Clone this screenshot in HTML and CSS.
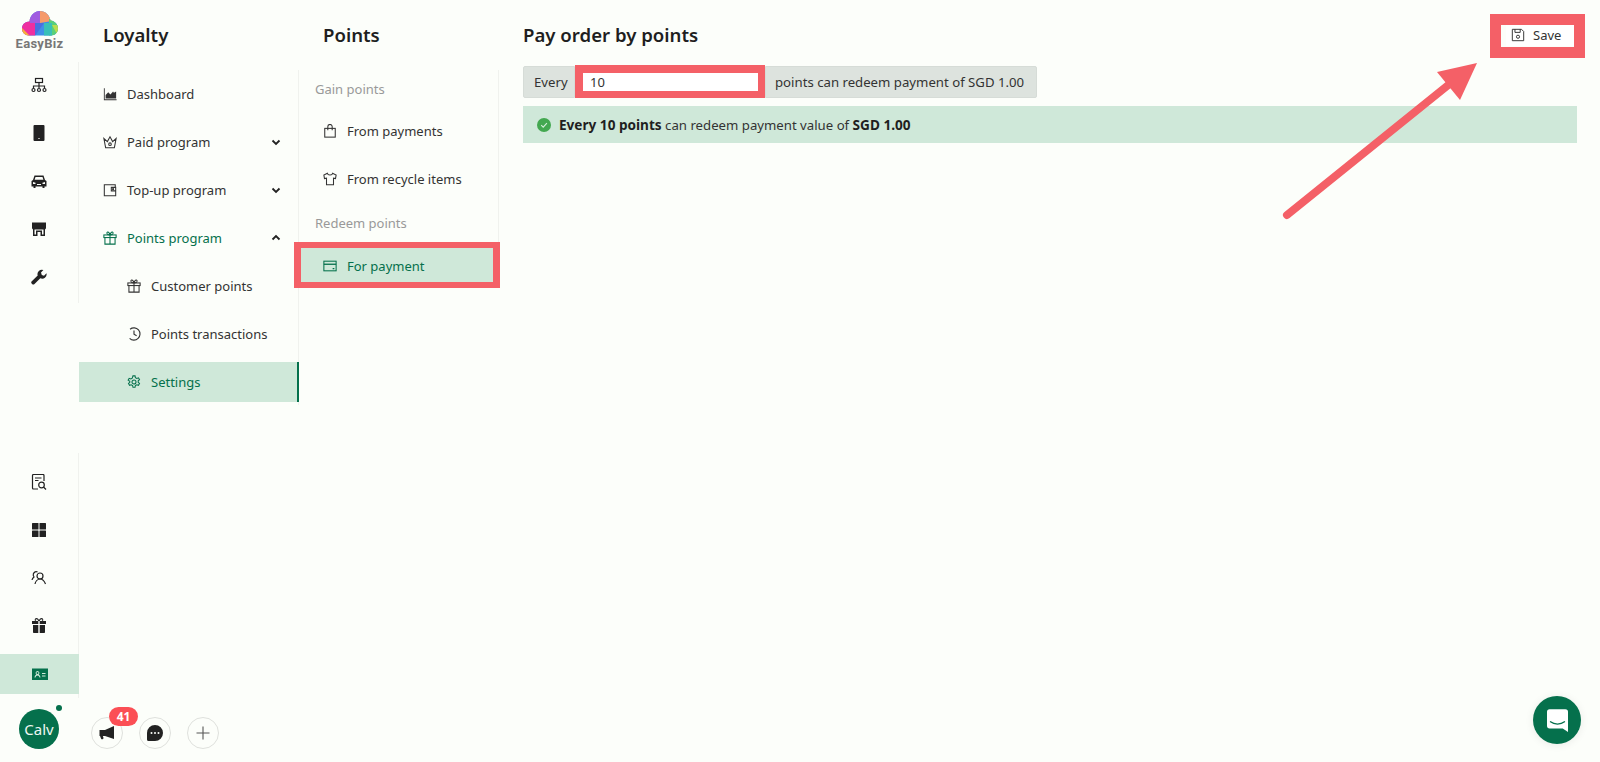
FILE: index.html
```html
<!DOCTYPE html>
<html lang="en">
<head>
    <meta charset="UTF-8">
    <meta name="viewport" content="width=device-width, initial-scale=1.0">
    <title>Pay order by points</title>
    <link rel="stylesheet" href="styles.css">
</head>
<body>
    <div class="app">
        <aside class="rail">
            <div class="logo">
                <svg width="36" height="25" viewBox="0 0 36 25">
                    <defs>
                        <clipPath id="cloud">
                            <path d="M7 24.500C3 24.500 0 21.500 0 17.500S3 10.500 7.500 10.500C8 4.500 12.500 0 18 0S27.500 4 28.500 9.500C32.800 10 36 13.300 36 17.500S32.800 24.500 29 24.500Z"/>
                        </clipPath>
                    </defs>
                    <g clip-path="url(#cloud)">
                        <rect width="36" height="25" fill="#3f8fe8"/>
                        <polygon points="0,8 13,8 13,25 0,25" fill="#ee2fa0"/>
                        <polygon points="8,0 18,0 18,12 8,12" fill="#a05ce0"/>
                        <polygon points="18,0 30,0 30,10 18,12" fill="#f59a6a"/>
                        <polygon points="27,8 36,8 36,25 27,25" fill="#58d07a"/>
                        <polygon points="13,12 22,12 13,25" fill="#4a6fe0"/>
                        <polygon points="22,12 30,12 30,25 22,25" fill="#38c0b8"/>
                        <polygon points="0,17 8,25 0,25" fill="#f5b03a"/>
                        <polygon points="30,14 36,14 36,25" fill="#b8dc50"/>
                    </g>
                </svg>
                <span class="logo-text">EasyBiz</span>
            </div>
            <nav class="rail-group rail-top">
                <a class="rail-item">
                    <svg class="icon" viewBox="0 0 16 16" fill="none" stroke="currentColor" stroke-width="1.2"><rect x="4.500" y="1.500" width="7" height="4"/><path d="M8 5.500V9M2.500 11V9h11v2M8 9v2"/><circle cx="2.500" cy="13" r="1.500"/><circle cx="8" cy="13" r="1.500"/><circle cx="13.500" cy="13" r="1.500"/></svg>
                </a>
                <a class="rail-item">
                    <svg class="icon" viewBox="0 0 16 16" fill="currentColor"><path d="M3.500 0h9A1 1 0 0 1 13.500 1v14a1 1 0 0 1-1 1h-9a1 1 0 0 1-1-1V1a1 1 0 0 1 1-1zM7.400 13v1h1.200v-1z" fill-rule="evenodd"/></svg>
                </a>
                <a class="rail-item">
                    <svg class="icon" viewBox="0 0 16 16" fill="currentColor"><path fill-rule="evenodd" d="M3.500 2.500h9L14 7l1.500 1v5.500h-2V15h-2v-1.500h-7V15h-2v-1.500h-2V8L2 7zM4.500 4 3.600 6.800h8.800L11.500 4zM2 9v2h2.500V9.800zM14 9l-2.500.8V11H14zM6 11v1h4v-1z"/></svg>
                </a>
                <a class="rail-item">
                    <svg class="icon" viewBox="0 0 16 16" fill="currentColor"><path fill-rule="evenodd" d="M1 1.500h14V7a1.500 1.500 0 0 1-1 1.400V15H9.500v-4h-3v4H2V8.400A1.500 1.500 0 0 1 1 7zM3.500 8.500v5h1.500V9.500h6v4h1.500v-5z"/></svg>
                </a>
                <a class="rail-item">
                    <svg class="icon" viewBox="0 0 16 16" fill="currentColor"><path d="M15.500 4.300 13 6.700 10.800 6 10 3.500 12.400 1A4.400 4.400 0 0 0 6.700 6.500L.8 12.300a1.700 1.700 0 0 0 0 2.400l.3.300a1.700 1.700 0 0 0 2.400 0l5.800-5.800a4.400 4.400 0 0 0 6.200-4.900z"/></svg>
                </a>
            </nav>
            <nav class="rail-group rail-bottom">
                <a class="rail-item">
                    <svg class="icon" viewBox="0 0 16 16" fill="none" stroke="currentColor" stroke-width="1.200"><path d="M7 15H2.500a1 1 0 0 1-1-1V1.500a1 1 0 0 1 1-1h9.500a1 1 0 0 1 1 1V7"/><path d="M4 4h6.500M4 6.500h3.500"/><circle cx="10.500" cy="11" r="2.800"/><path d="M12.500 13l2.500 2.500"/></svg>
                </a>
                <a class="rail-item">
                    <svg class="icon" viewBox="0 0 16 16" fill="currentColor"><rect x="1" y="1" width="6.500" height="6.500" rx=".5"/><rect x="8.500" y="1" width="6.500" height="6.500" rx=".5"/><rect x="1" y="8.500" width="6.500" height="6.500" rx=".5"/><rect x="8.500" y="8.500" width="6.500" height="6.500" rx=".5"/></svg>
                </a>
                <a class="rail-item">
                    <svg class="icon" viewBox="0 0 16 16" fill="none" stroke="currentColor" stroke-width="1.200"><path d="M1 10c.3-1.500 1-2.300 2-3-.8-1-1-2-.6-3.200C3 2 5 1 6.500 2"/><circle cx="9" cy="6" r="3"/><path d="M4 14c.5-2.500 2.500-5 5-5s4.500 2.500 5.500 5"/></svg>
                </a>
                <a class="rail-item">
                    <svg class="icon" viewBox="0 0 16 16" fill="currentColor"><path fill-rule="evenodd" d="M5.500 0C4 0 3.200 1.600 4 3H1v3h6.300V3h1.400v3H15V3h-3c.8-1.400 0-3-1.500-3C9.500 0 8.500.8 8 2 7.500.8 6.500 0 5.500 0zM5.500 1.200c.8 0 1.500 1 1.700 1.800H5.500c-1.200 0-1.200-1.800 0-1.800zM10.500 1.200c1.200 0 1.200 1.800 0 1.800H8.800c.2-.8.900-1.800 1.700-1.800z"/><path d="M2 7h5.300v8H2.800a.8.8 0 0 1-.8-.8zM8.700 7H14v7.200a.8.8 0 0 1-.8.8H8.700z"/></svg>
                </a>
                <a class="rail-item active">
                    <svg class="icon" viewBox="0 0 16 16" fill="currentColor"><path fill-rule="evenodd" d="M0 2.500h16v11.500H0zM5.500 5a2 2 0 0 0-1.200 3.500C3.300 9 2.700 10 2.500 11.500h1c.3-1.300 1-2 2-2s1.700.7 2 2h1c-.2-1.500-.8-2.500-1.800-3A2 2 0 0 0 5.500 5zm0 1a1 1 0 1 1 0 2 1 1 0 0 1 0-2zM10 7v1h3.500V7zm0 2.500v1h3.500v-1z"/></svg>
                </a>
            </nav>
            <div class="avatar">Calv<span class="online"></span></div>
        </aside>

        <section class="menu-col">
            <h2 class="col-title">Loyalty</h2>
            <ul class="menu">
                <li class="menu-item">
                    <svg class="icon-sm" viewBox="0 0 16 16" fill="currentColor"><path d="M1 1.500h1V14h13.500v1H1z"/><path d="M3 13V9l3-3 2.500 2.500L11.500 5l1 1.500L15 5v8z"/></svg>
                    Dashboard
                </li>
                <li class="menu-item">
                    <svg class="icon-sm" viewBox="0 0 16 16" fill="none" stroke="currentColor" stroke-width="1.200"><path d="M3 14.500h10L15 4l-4 3.500L8 2 5 7.500 1 4z"/><circle cx="8" cy="10.500" r="1.500"/></svg>
                    Paid program
                    <svg class="chev" viewBox="0 0 12 12" fill="none" stroke="currentColor" stroke-width="1.800"><path d="M2.500 4.500 6 8l3.500-3.500"/></svg>
                </li>
                <li class="menu-item">
                    <svg class="icon-sm" viewBox="0 0 16 16" fill="none" stroke="currentColor" stroke-width="1.200"><path d="M14 5V2H1.500v12.500H14.500V5H9.500v4H14.500"/><circle cx="11.500" cy="7" r=".6"/></svg>
                    Top-up program
                    <svg class="chev" viewBox="0 0 12 12" fill="none" stroke="currentColor" stroke-width="1.800"><path d="M2.500 4.500 6 8l3.500-3.500"/></svg>
                </li>
                <li class="menu-item is-open">
                    <svg class="icon-sm" viewBox="0 0 16 16" fill="none" stroke="currentColor" stroke-width="1.200"><rect x="1" y="4.500" width="14" height="3"/><path d="M2.200 7.500V15h11.600V7.500M8 4.500V15M8 4.500C6.500 4.500 4 4 4.500 2S7.500 1.500 8 4.500C8.500 1.500 11 0 11.500 2S9.500 4.500 8 4.500z"/></svg>
                    Points program
                    <svg class="chev up" viewBox="0 0 12 12" fill="none" stroke="currentColor" stroke-width="1.800"><path d="M2.500 7.500 6 4l3.500 3.500"/></svg>
                </li>
                <li class="menu-item nested">
                    <svg class="icon-sm" viewBox="0 0 16 16" fill="none" stroke="currentColor" stroke-width="1.200"><rect x="1" y="4.500" width="14" height="3"/><path d="M2.200 7.500V15h11.600V7.500M8 4.500V15M8 4.500C6.500 4.500 4 4 4.500 2S7.500 1.500 8 4.500C8.500 1.500 11 0 11.500 2S9.500 4.500 8 4.500z"/></svg>
                    Customer points
                </li>
                <li class="menu-item nested">
                    <svg class="icon-sm" viewBox="0 0 16 16" fill="none" stroke="currentColor" stroke-width="1.300"><path d="M3.500 2.500A7 7 0 1 1 3 13"/><path d="M8 4v4.300l3 1.700"/></svg>
                    Points transactions
                </li>
                <li class="menu-item nested selected">
                    <svg class="icon-sm" viewBox="0 0 16 16" fill="none" stroke="currentColor" stroke-width="1.200"><path d="M6.800 1h2.400l.4 2 1.600.9 1.900-.7 1.200 2.100-1.500 1.300v1.800l1.500 1.300-1.200 2.100-1.900-.7-1.600.9-.4 2H6.800l-.4-2-1.600-.9-1.900.7-1.200-2.100 1.500-1.300V7.200L1.300 5.900l1.200-2.100 1.900.7L6 3.600z"/><circle cx="8" cy="8" r="2.300"/></svg>
                    Settings
                </li>
            </ul>
        </section>

        <section class="sub-col">
            <h2 class="col-title">Points</h2>
            <div class="sub-list">
                <div class="sub-label">Gain points</div>
                <div class="sub-item">
                    <svg class="icon-sm" viewBox="0 0 16 16" fill="none" stroke="currentColor" stroke-width="1.200"><rect x="2" y="5" width="12" height="10"/><path d="M5.500 7V3a2.500 2.500 0 0 1 5 0v4"/></svg>
                    From payments
                </div>
                <div class="sub-item">
                    <svg class="icon-sm" viewBox="0 0 16 16" fill="none" stroke="currentColor" stroke-width="1.200"><path d="M5 1.500 1 3.500l.7 4 2.300-.5V14.500h8V7l2.300.5.700-4-4-2c-.5 2.500-5.500 2.500-6 0z"/></svg>
                    From recycle items
                </div>
                <div class="sub-label redeem">Redeem points</div>
                <div class="sub-item selected">
                    <svg class="icon-sm" viewBox="0 0 16 16" fill="none" stroke="currentColor" stroke-width="1.200"><rect x="1" y="2.500" width="14" height="11"/><path d="M1 6h14" stroke-width="1.500"/><path d="M11 11h2" stroke-width="1.500"/></svg>
                    For payment
                </div>
            </div>
        </section>

        <main class="content">
            <header class="content-head">
                <h2 class="col-title">Pay order by points</h2>
                <button class="save-btn">
                    <svg class="icon-sm" viewBox="0 0 16 16" fill="none" stroke="currentColor" stroke-width="1.100"><path d="M1.500 1.500h10.500l2.500 2.500v10.500h-13z"/><path d="M4.500 1.500v3.500h6V1.500"/><circle cx="8" cy="10" r="1.800"/></svg>
                    Save
                </button>
            </header>
            <div class="input-group">
                <span class="addon first">Every</span>
                <input class="points-input" type="text" value="10">
                <span class="addon">points can redeem payment of SGD 1.00</span>
            </div>
            <div class="alert">
                <svg class="check" viewBox="0 0 14 14"><circle cx="7" cy="7" r="7" fill="#43a850"/><path d="M4.200 7.200 6.200 9.200 9.900 5.200" fill="none" stroke="#d5efdc" stroke-width="1.100"/></svg>
                <span><strong>Every 10 points</strong> can redeem payment value of <strong>SGD 1.00</strong></span>
            </div>
        </main>
    </div>

    <div class="dock">
        <div class="bubble">
            <svg class="icon" viewBox="0 0 16 16" fill="currentColor"><path d="M15 1v13L6 11H3.800l.6 1.500a1.300 1.300 0 0 1-2.400 1L1 11H.5V5H6z"/></svg>
            <span class="badge">41</span>
        </div>
        <div class="bubble">
            <svg class="icon" viewBox="0 0 16 16" fill="currentColor"><path fill-rule="evenodd" d="M8 0a8 8 0 0 1 0 16H1.500A1.500 1.500 0 0 1 0 14.500V8a8 8 0 0 1 8-8zM4.500 7a1 1 0 1 0 0 2 1 1 0 0 0 0-2zM8 7a1 1 0 1 0 0 2 1 1 0 0 0 0-2zM11.500 7a1 1 0 1 0 0 2 1 1 0 0 0 0-2z"/></svg>
        </div>
        <div class="bubble plus">
            <svg class="icon" viewBox="0 0 16 16" fill="none" stroke="currentColor" stroke-width="1.100"><path d="M8 1.500v13M1.500 8h13"/></svg>
        </div>
    </div>

    <div class="chat-btn">
        <svg width="21" height="23" viewBox="0 0 24 26" fill="#fff"><path d="M3 0h18a3 3 0 0 1 3 3v23l-6-4H3a3 3 0 0 1-3-3V3a3 3 0 0 1 3-3z"/><path d="M4 14.500c4.500 3.500 11.500 3.500 16 0" fill="none" stroke="#05704c" stroke-width="1.600" stroke-linecap="round"/></svg>
    </div>

    <!-- red annotations drawn over the screenshot -->
    <div class="mark mark-payment"></div>
    <div class="mark mark-input"></div>
    <div class="mark mark-save"></div>
    <svg class="arrow" width="1600" height="762" viewBox="0 0 1600 762">
        <path d="M1287 215 1452 82" stroke="#f46067" stroke-width="8" stroke-linecap="round"/>
        <polygon points="1477,63 1437,72 1460,100" fill="#f46067"/>
    </svg>
</body>
</html>
```

FILE: styles.css
```css
* {
    box-sizing: border-box;
}

html, body {
    height: 100%;
    margin: 0;
}

body {
    font-family: "Noto Sans", Arial, sans-serif;
    font-size: 13px;
    color: #333;
    background-color: #fcfefa;
    overflow: hidden;
}

.app {
    display: flex;
    height: 762px;
}

.icon {
    width: 16px;
    height: 16px;
    display: block;
}

.icon-sm {
    width: 14px;
    height: 14px;
    flex-shrink: 0;
}

/* left rail */
.rail {
    width: 79px;
    flex-shrink: 0;
    display: flex;
    flex-direction: column;
}

.logo {
    height: 62px;
    padding-top: 11px;
    display: flex;
    flex-direction: column;
    align-items: center;
}

.logo-text {
    font-family: Roboto, Arial, sans-serif;
    font-size: 13px;
    font-weight: 700;
    line-height: 15px;
    letter-spacing: 0.3px;
    color: #777;
}

.rail-group {
    border-right: 1px solid #f0f2ee;
}

.rail-top {
    height: 241px;
    margin-bottom: 150px;
    padding-top: 3px;
}

.rail-bottom {
    height: 245px;
    padding-top: 9px;
}

.rail-item {
    height: 40px;
    margin-bottom: 8px;
    display: flex;
    align-items: center;
    justify-content: center;
    color: #222;
}

.rail-item.active {
    background-color: #cfe8d9;
    color: #05704c;
    margin-right: -1px;
}

.avatar {
    position: relative;
    width: 40px;
    height: 40px;
    margin: 11px 0 0 19px;
    border-radius: 50%;
    background-color: #05704c;
    color: #eef7f2;
    font-size: 15px;
    line-height: 40px;
    text-align: center;
}

.online {
    position: absolute;
    top: -4px;
    right: -3px;
    width: 6px;
    height: 6px;
    border-radius: 50%;
    background-color: #05704c;
}

/* columns */
.col-title {
    margin: 0;
    font-size: 18.6px;
    font-weight: 600;
    line-height: 26px;
    color: #1f1f1f;
}

.menu-col {
    width: 220px;
    flex-shrink: 0;
}

.menu-col .col-title {
    padding: 22px 0 0 24px;
    height: 70px;
}

.menu {
    list-style: none;
    margin: 0;
    padding: 4px 0 3px;
    border-right: 1px solid #f0f2ee;
}

.menu-item {
    position: relative;
    height: 40px;
    margin-bottom: 8px;
    padding-left: 24px;
    display: flex;
    align-items: center;
    gap: 10px;
}

.menu-item:last-child {
    margin-bottom: 0;
}

.menu-item.is-open {
    color: #05704c;
}

.menu-item.nested {
    padding-left: 48px;
}

.menu-item.selected {
    background-color: #cfe8d9;
    color: #05704c;
    border-right: 2px solid #05704c;
    margin-right: -1px;
}

.chev {
    position: absolute;
    right: 16px;
    top: 14px;
    width: 12px;
    height: 12px;
    color: #222;
}

.sub-col {
    width: 200px;
    flex-shrink: 0;
}

.sub-col .col-title {
    padding: 22px 0 0 24px;
    height: 70px;
}

.sub-list {
    height: 175px;
    border-right: 1px solid #f0f2ee;
}

.sub-label {
    height: 40px;
    padding-left: 16px;
    line-height: 39px;
    color: #999;
}

.sub-label.redeem {
    height: 38px;
    margin-top: -3px;
    line-height: 38px;
}

.sub-item {
    height: 40px;
    margin-bottom: 8px;
    padding-left: 24px;
    display: flex;
    align-items: center;
    gap: 10px;
}

.sub-label + .sub-item {
    margin-top: 1px;
}

.sub-label.redeem + .sub-item {
    margin-top: 4px;
}

.sub-item.selected {
    background-color: #cfe8d9;
    color: #05704c;
}

/* main area */
.content {
    flex: 1;
    padding: 0 23px 0 24px;
}

.content-head {
    height: 66px;
    padding-top: 22px;
    display: flex;
    justify-content: space-between;
    align-items: flex-start;
}

.save-btn {
    display: flex;
    align-items: center;
    gap: 8px;
    width: 74px;
    height: 22px;
    margin: 2px -3px 0 0;
    padding: 0 0 0 5px;
    border: none;
    background-color: #fff;
    color: #333;
    font-family: inherit;
    font-size: 13px;
}

.input-group {
    display: flex;
    width: 514px;
    height: 32px;
    margin-bottom: 8px;
    font-size: 13.2px;
}

.addon {
    flex: 1;
    padding-left: 9px;
    line-height: 30px;
    background-color: #dde3de;
    border: 1px solid #d6dcd7;
    border-radius: 0 2px 2px 0;
    white-space: nowrap;
}

.addon.first {
    flex: none;
    width: 52px;
    padding-left: 10px;
    border-radius: 2px 0 0 2px;
}

.points-input {
    width: 190px;
    padding: 0 0 0 15px;
    border: none;
    background-color: #fff;
    color: #333;
    font-family: inherit;
    font-size: 13px;
    outline: none;
}

.alert {
    height: 37px;
    padding-left: 14px;
    display: flex;
    align-items: center;
    gap: 8px;
    background-color: #cfe8d9;
    font-size: 13.2px;
}

.alert strong {
    font-size: 13.6px;
    color: #1f1f1f;
}

.check {
    width: 14px;
    height: 14px;
}

/* bottom dock, sits over the empty part of the menu column */
.dock {
    position: absolute;
    left: 91px;
    top: 717px;
    display: flex;
    gap: 16px;
}

.bubble {
    position: relative;
    width: 32px;
    height: 32px;
    border-radius: 50%;
    border: 1px solid #dfe1dd;
    display: flex;
    align-items: center;
    justify-content: center;
    color: #222;
}

.bubble.plus {
    color: #555;
}

.badge {
    position: absolute;
    top: -11px;
    left: 17px;
    width: 29px;
    height: 19px;
    border-radius: 10px;
    background-color: #fb4f55;
    color: #fff;
    font-size: 12px;
    font-weight: 700;
    line-height: 19px;
    text-align: center;
}

.chat-btn {
    position: absolute;
    right: 19px;
    bottom: 18px;
    width: 48px;
    height: 48px;
    border-radius: 50%;
    background-color: #05704c;
    box-shadow: 0 1px 8px rgba(0, 0, 0, 0.08);
    display: flex;
    align-items: center;
    justify-content: center;
}

/* annotations */
.mark {
    position: absolute;
    border-style: solid;
    border-color: #f46067;
}

.mark-payment {
    left: 294px;
    top: 242px;
    width: 206px;
    height: 46px;
    border-width: 6px 7px;
}

.mark-input {
    left: 575px;
    top: 65px;
    width: 190px;
    height: 33px;
    border-width: 8px 7px 7px 8px;
}

.mark-save {
    left: 1490px;
    top: 14px;
    width: 95px;
    height: 44px;
    border-width: 11px;
}

.arrow {
    position: absolute;
    left: 0;
    top: 0;
    pointer-events: none;
}
```
